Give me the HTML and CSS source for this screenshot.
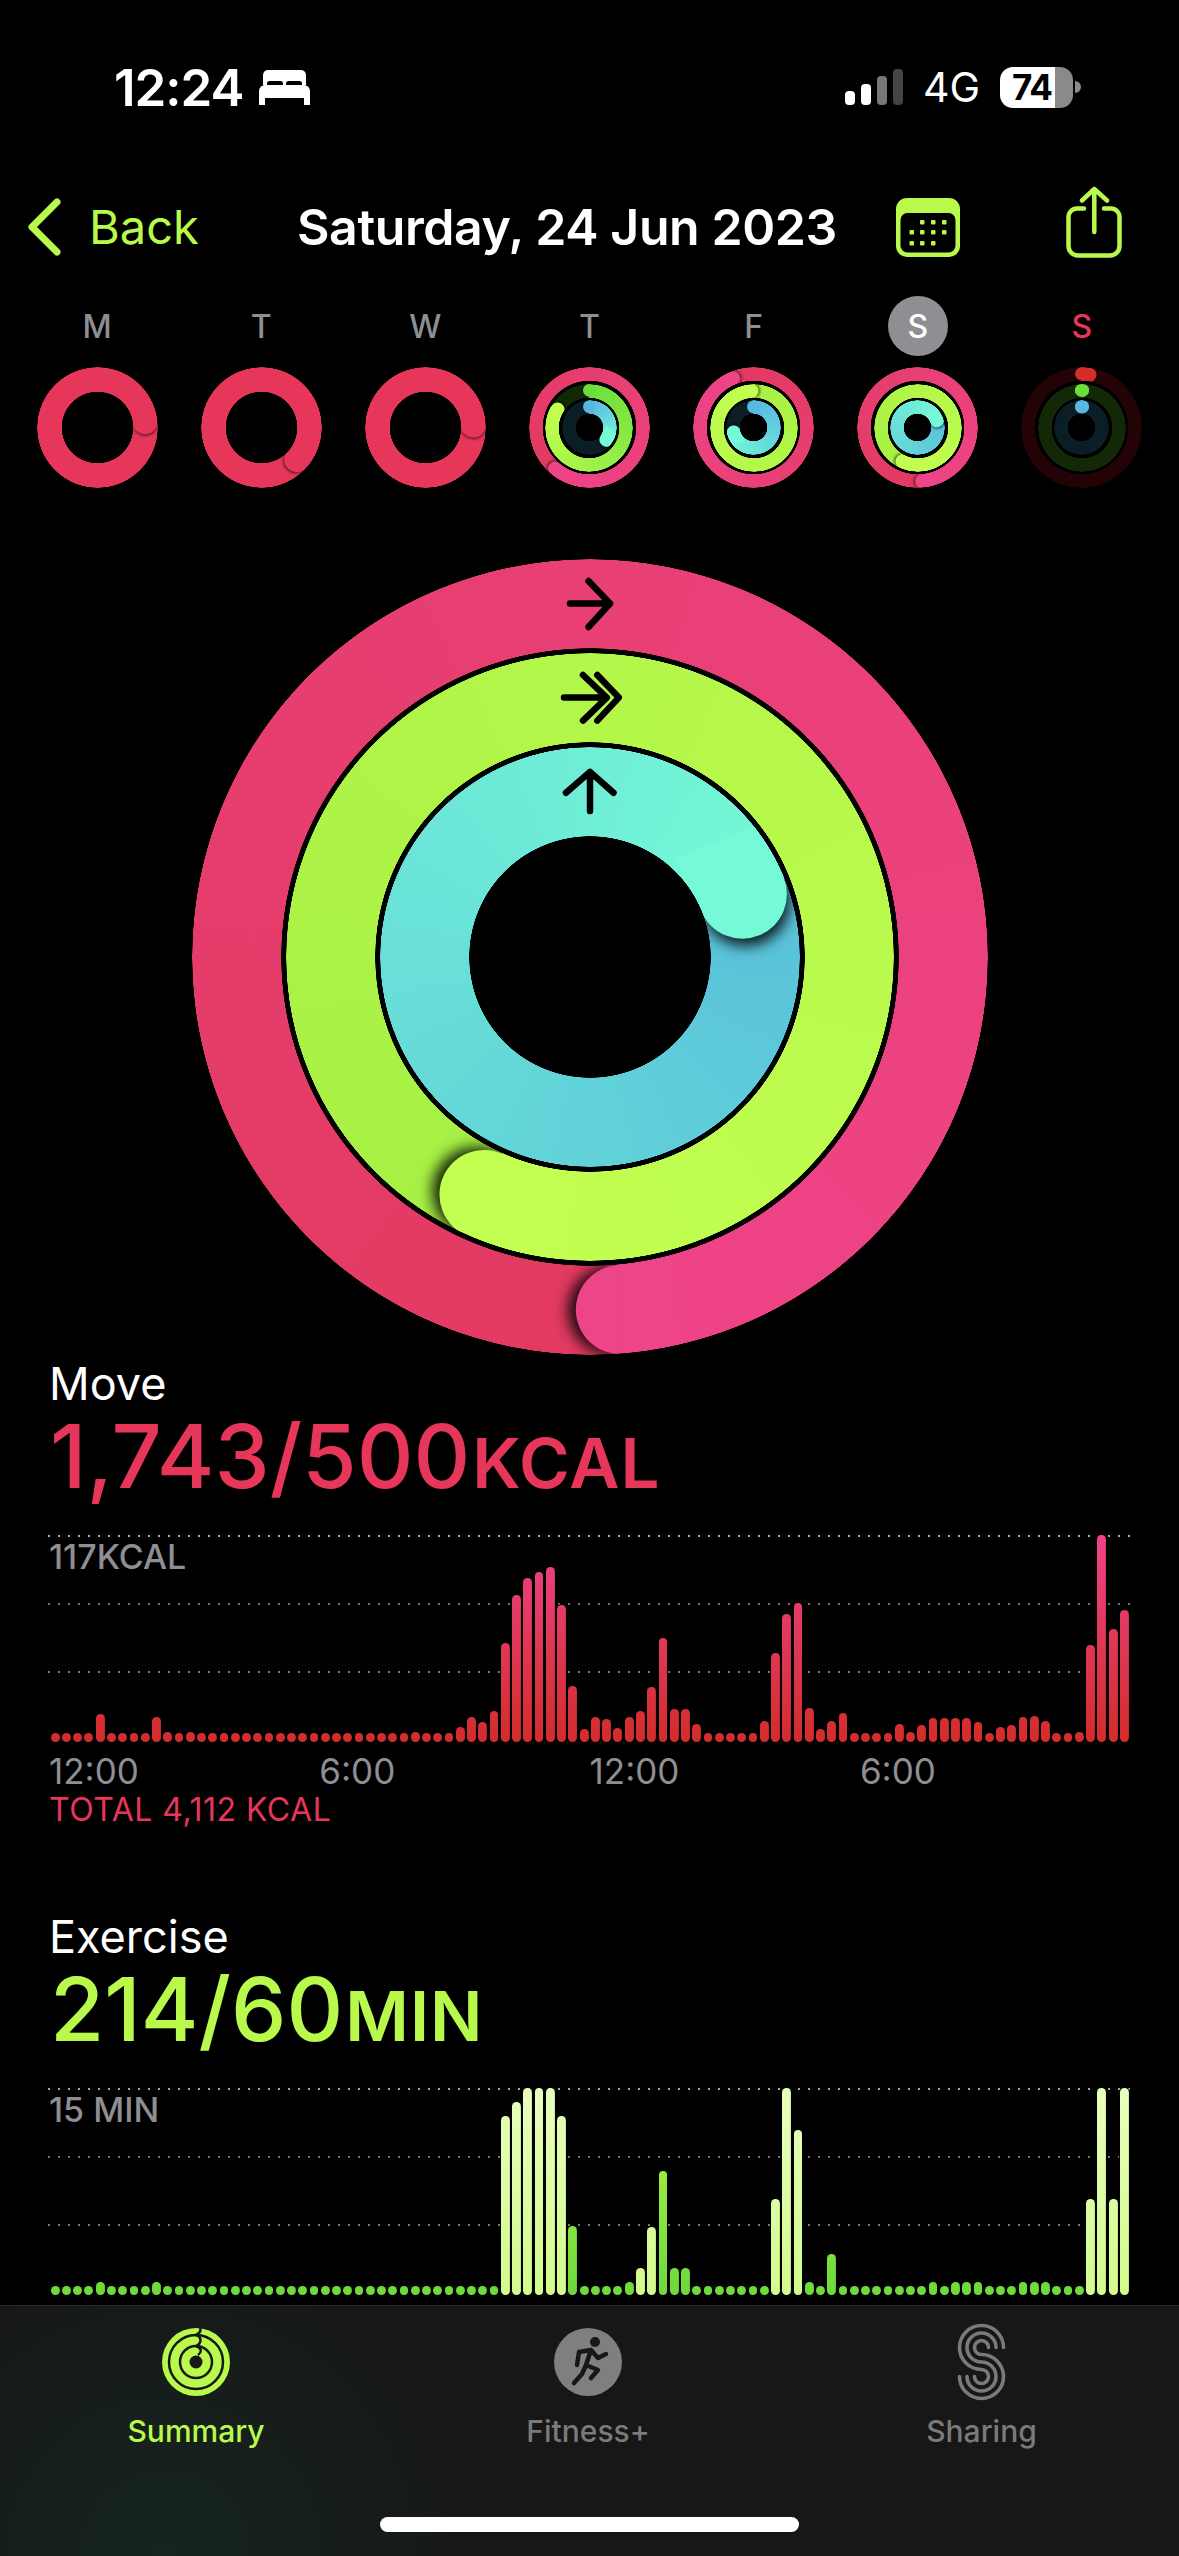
FILE: index.html
```html
<!DOCTYPE html>
<html lang="en">
<head>
    <meta charset="UTF-8">
    <meta name="viewport" content="width=device-width, initial-scale=1.0">
    <title>Activity Summary</title>
    <link rel="stylesheet" href="styles.css">
</head>
<body>
    <main class="page">
        <div class="status">
            <div class="status-left">
                <span class="time">12:24</span>
                <svg class="bed" viewBox="0 0 51 35">
                    <path fill="#fff" d="M9 0h33a5 5 0 0 1 5 5v10H4V5a5 5 0 0 1 5-5z"/>
                    <rect x="8" y="11" width="16" height="8" rx="2.500" fill="#000"/>
                    <rect x="27" y="11" width="16" height="8" rx="2.500" fill="#000"/>
                    <path fill="#fff" d="M6 15h39a6 6 0 0 1 6 6v14h-6v-7H6v7H0V21a6 6 0 0 1 6-6z"/>
                </svg>
            </div>
            <div class="status-right">
                <div class="signal">
                    <i class="sig-1"></i><i class="sig-2"></i><i class="sig-3"></i><i class="sig-4"></i>
                </div>
                <span class="network">4G</span>
                <div class="battery"><span>74</span></div>
                <i class="battery-nub"></i>
            </div>
        </div>

        <div class="nav">
            <div class="back">
                <svg class="chevron" viewBox="0 0 36 60">
                    <path d="M30 5L5 30l25 25" fill="none" stroke="#b9f94c" stroke-width="7" stroke-linecap="round" stroke-linejoin="round"/>
                </svg>
                <span>Back</span>
            </div>
            <div class="nav-title">Saturday, 24 Jun 2023</div>
            <svg class="calendar" viewBox="0 0 64 59">
                <rect width="64" height="59" rx="11" fill="#b9f94c"/>
                <rect x="4.500" y="15" width="55" height="39.500" rx="7" fill="#000"/>
                <g fill="#b9f94c">
                    <rect x="24" y="22" width="4.500" height="4.500" rx="1"/><rect x="35" y="22" width="4.500" height="4.500" rx="1"/><rect x="46" y="22" width="4.500" height="4.500" rx="1"/>
                    <rect x="13.500" y="32" width="4.500" height="4.500" rx="1"/><rect x="24" y="32" width="4.500" height="4.500" rx="1"/><rect x="35" y="32" width="4.500" height="4.500" rx="1"/><rect x="46" y="32" width="4.500" height="4.500" rx="1"/>
                    <rect x="13.500" y="43" width="4.500" height="4.500" rx="1"/><rect x="24" y="43" width="4.500" height="4.500" rx="1"/><rect x="35" y="43" width="4.500" height="4.500" rx="1"/>
                </g>
            </svg>
            <svg class="share" viewBox="0 0 56 72">
                <g fill="none" stroke="#b9f94c" stroke-width="4.500" stroke-linecap="round" stroke-linejoin="round">
                    <path d="M18 22.500H11a8.500 8.500 0 0 0-8.500 8.500v29a9.500 9.500 0 0 0 9.500 9.500h32a9.500 9.500 0 0 0 9.500-9.500V31a8.500 8.500 0 0 0-8.500-8.500h-7"/>
                    <path d="M28.300 46V3M16 14.500L28.300 3l12.700 11.500"/>
                </g>
            </svg>
        </div>

        <div class="week" id="week"></div>

        <div class="big-rings">
            <div class="activity" id="bigRings">
                <svg class="ring-arrows" viewBox="0 0 796 796">
                    <g fill="none" stroke="#000" stroke-width="6.500" stroke-linecap="round" stroke-linejoin="round">
                        <path d="M378 44.500h40M396.500 22l21.500 22.500-21.500 23.500"/>
                        <path d="M372 138.600h42M391 116l23.800 22.600L391 161.600M405.300 116l21.500 22.600-21.500 23"/>
                        <path d="M398 252v-39M374 233.800l24-20.900 23.500 20.900"/>
                    </g>
                </svg>
            </div>
        </div>

        <section class="metric">
            <div class="metric-label">Move</div>
            <div class="metric-value move-text">1,743/500<small>KCAL</small></div>
            <div class="chart chart-move" id="moveChart">
                <div class="gridlines"><i></i><i></i><i></i></div>
                <div class="chart-max">117KCAL</div>
            </div>
            <div class="axis"><span>12:00</span><span>6:00</span><span>12:00</span><span>6:00</span></div>
            <div class="total">TOTAL 4,112 KCAL</div>
        </section>

        <section class="metric metric-exercise">
            <div class="metric-label">Exercise</div>
            <div class="metric-value exercise-text">214/60<small>MIN</small></div>
            <div class="chart chart-exercise" id="exerciseChart">
                <div class="gridlines"><i></i><i></i><i></i></div>
                <div class="chart-max">15 MIN</div>
            </div>
        </section>
    </main>

    <nav class="tabbar">
        <div class="tabs">
            <div class="tab tab-active">
                <svg class="tab-icon" viewBox="0 0 68 68">
                    <circle cx="34" cy="34" r="34" fill="#b9f94c"/>
                    <circle cx="34" cy="34" r="6.500" fill="#161716"/>
                    <g fill="none" stroke="#161716" stroke-width="2.500">
                        <circle cx="34" cy="34" r="27"/>
                        <circle cx="34" cy="34" r="16"/>
                        <path d="M38 0c2 4-2 6-4 7 6 2 6 8 0 11 6 2 6 6 2 9"/>
                    </g>
                </svg>
                <span>Summary</span>
            </div>
            <div class="tab">
                <svg class="tab-icon" viewBox="0 0 68 68">
                    <circle cx="34" cy="34" r="34" fill="#7f7f7f"/>
                    <circle cx="41" cy="14" r="5" fill="#161716"/>
                    <g fill="none" stroke="#161716" stroke-width="4.500" stroke-linecap="round" stroke-linejoin="round">
                        <path d="M37 22l-5 15 12 5-7 8M32 37l-4 9-8 9M37 22l-12 2-2 13M37 22l7 8 8-4"/>
                    </g>
                </svg>
                <span>Fitness+</span>
            </div>
            <div class="tab">
                <svg class="tab-icon tab-icon-sharing" viewBox="0 0 49 78">
                    <g fill="none" stroke="#7a7a7a" stroke-width="3.600" stroke-linecap="round">
                        <path d="M46.500 24.500A22 22 0 1 0 24.500 46.500 7 7 0 1 1 17.500 53.500"/>
                        <path d="M39 24.500A14.500 14.500 0 1 0 24.500 39 14.500 14.500 0 1 1 10 53.500"/>
                        <path d="M31.500 24.500A7 7 0 1 0 24.500 31.500 22 22 0 1 1 2.500 53.500"/>
                    </g>
                </svg>
                <span>Sharing</span>
            </div>
        </div>
        <div class="home-indicator"></div>
    </nav>

    <script>
        const moveBars = [
            9, 9, 9, 9, 28, 9, 9, 9, 9, 25, 10, 9, 10, 9, 9, 9, 9, 9, 9, 9, 9, 9, 9, 9,
            9, 9, 9, 9, 9, 9, 9, 9, 10, 9, 9, 9, 15, 25, 20, 31, 99, 147, 164, 170, 175, 137, 56, 13,
            25, 23, 14, 25, 31, 55, 104, 33, 33, 18, 9, 9, 9, 9, 9, 21, 89, 128, 139, 34, 13, 21, 29, 9,
            9, 9, 9, 18, 10, 17, 24, 24, 24, 24, 20, 9, 15, 17, 25, 26, 21, 9, 9, 10, 97, 207, 113, 132
        ];
        const exerciseBars = [
            9, 9, 9, 9, 13, 9, 9, 9, 9, 13, 9, 9, 9, 9, 9, 9, 9, 9, 9, 9, 9, 9, 9, 9,
            9, 9, 9, 9, 9, 9, 9, 9, 9, 9, 9, 9, 9, 9, 9, 9, 179, 193, 207, 207, 207, 179, 69, 9,
            9, 9, 9, 13, 27, 68, 124, 27, 27, 9, 9, 9, 9, 9, 9, 9, 96, 207, 165, 13, 9, 41, 9, 9,
            9, 9, 9, 9, 9, 9, 13, 9, 13, 13, 13, 9, 9, 9, 13, 13, 13, 9, 9, 9, 96, 207, 96, 207
        ];
        const briskBars = [40, 41, 42, 43, 44, 45, 52, 53, 64, 65, 66, 92, 93, 94, 95];

        const bigSizes = { outer: [796, 608, 420], stroke: 89, shadow: "big" };
        const smallSizes = { outer: [121, 88, 55], stroke: 13.5, shadow: "small" };

        // angle = where the ring head stops, over = more than one full lap
        const week = [
            { day: "M", single: 83 },
            { day: "T", single: 132 },
            { day: "W", single: 87 },
            { day: "T", rings: [{ angle: 220, over: true }, { angle: 299 }, { angle: 125 }] },
            { day: "F", rings: [{ angle: 337, over: true }, { angle: 356, over: true }, { angle: 256 }] },
            { day: "S", today: true, rings: [{ angle: 175, over: true }, { angle: 204, over: true }, { angle: 67.5, over: true }] },
            { day: "S", sunday: true, rings: [{ angle: 8 }, { angle: 0 }, { angle: 0 }] }
        ];
        const ringNames = ["ring-move", "ring-exercise", "ring-stand"];

        function capHtml(angle, stroke, outer, extra) {
            let radius = outer / 2 - stroke / 2;
            return `<i class="cap ${extra}" style="--angle:${angle}deg;--radius:${radius}px"></i>`;
        }

        function ringHtml(name, ring, outer, stroke, shadow) {
            let from = ring.over ? ring.angle : 0;
            let end = ring.over ? 360 : ring.angle;
            let caps = capHtml(ring.angle, stroke, outer, "cap-head cap-" + shadow);
            if (!ring.over) caps = capHtml(0, stroke, outer, "cap-start") + caps;
            let over = ring.over ? "over" : "";
            return `<div class="ring ${name} ${over}" style="--size:${outer}px;--stroke:${stroke}px;--from:${from}deg;--end:${end}deg">${caps}</div>`;
        }

        function ringsHtml(rings, sizes) {
            return rings.map((ring, i) => ringHtml(ringNames[i], ring, sizes.outer[i], sizes.stroke, sizes.shadow)).join("");
        }

        function drawWeek() {
            let html = "";
            week.forEach(item => {
                let labelClass = item.today ? "day-today" : item.sunday ? "day-sunday" : "";
                let activityClass = item.sunday ? "activity activity-empty" : "activity";
                let rings = item.single !== undefined
                    ? `<div class="ring ring-single over" style="--size:121px;--stroke:24.5px;--from:0deg;--end:360deg">${capHtml(item.single, 24.5, 121, "cap-head cap-small")}</div>`
                    : ringsHtml(item.rings, smallSizes);
                html += `
                    <div class="day">
                        <div class="day-label ${labelClass}">${item.day}</div>
                        <div class="${activityClass}">${rings}</div>
                    </div>
                `;
            });
            document.getElementById("week").innerHTML = html;
        }

        function drawChart(id, bars, brisk) {
            let html = "";
            bars.forEach((height, i) => {
                let cls = brisk.includes(i) ? "bar bar-brisk" : "bar";
                html += `<div class="${cls}" style="height:${height}px"></div>`;
            });
            document.getElementById(id).insertAdjacentHTML("beforeend", `<div class="bars">${html}</div>`);
        }

        drawWeek();
        drawChart("moveChart", moveBars, []);
        drawChart("exerciseChart", exerciseBars, briskBars);
        document.getElementById("bigRings").insertAdjacentHTML("afterbegin", ringsHtml(week[5].rings, bigSizes));
    </script>
</body>
</html>
```

FILE: styles.css
```css
* {
    box-sizing: border-box;
}
html, body {
    margin: 0;
    height: 2556px;
    overflow: hidden;
}
body {
    display: flex;
    flex-direction: column;
    background: #000;
    color: #fff;
    font-family: Inter, "Liberation Sans", sans-serif;
}
.page {
    flex: 1;
    min-height: 0;
    overflow: hidden;
}
svg {
    display: block;
}

/* status bar */
.status {
    height: 174px;
    display: flex;
    justify-content: space-between;
    align-items: center;
    padding: 0 98px 0 114px;
}
.status-left, .status-right {
    display: flex;
    align-items: center;
}
.time {
    font-size: 51px;
    font-weight: 600;
    letter-spacing: -1px;
}
.bed {
    width: 51px;
    height: 35px;
    margin-left: 15px;
}
.signal {
    display: flex;
    align-items: flex-end;
    gap: 6px;
    height: 36px;
}
.signal i {
    width: 10px;
    border-radius: 4px;
    background: #fff;
}
.sig-1 { height: 14px; }
.sig-2 { height: 21px; }
.sig-3 { height: 29px; background: #777 !important; }
.sig-4 { height: 36px; background: #444 !important; }
.network {
    margin-left: 20px;
    font-size: 41px;
    font-weight: 400;
}
.battery {
    width: 73px;
    height: 41px;
    margin-left: 20px;
    border-radius: 13px;
    background: linear-gradient(90deg, #fff 75%, #8a8a8a 75%);
    color: #000;
    font-size: 35px;
    font-weight: 700;
    line-height: 41px;
    padding-left: 12px;
    letter-spacing: -1px;
}
.battery-nub {
    width: 6px;
    height: 12px;
    margin-left: 2px;
    border-radius: 0 6px 6px 0;
    background: #8a8a8a;
}

/* nav */
.nav {
    height: 106px;
    display: flex;
    align-items: center;
    position: relative;
    padding-left: 27px;
}
.back {
    display: flex;
    align-items: center;
    width: 270px;
    color: #b9f94c;
    font-size: 47px;
}
.back span {
    margin-top: -2px;
}
.chevron {
    width: 36px;
    height: 60px;
    margin-right: 26px;
}
.nav-title {
    width: 599px;
    font-size: 50px;
    font-weight: 600;
    letter-spacing: -0.4px;
}
.calendar {
    width: 64px;
    height: 59px;
}
.share {
    width: 56px;
    height: 72px;
    margin-left: 106px;
    margin-top: -10px;
}

/* week strip */
.week {
    margin-top: 16px;
    padding: 0 15px;
    display: grid;
    grid-template-columns: repeat(7, 1fr);
}
.day {
    display: flex;
    flex-direction: column;
    align-items: center;
    gap: 11px;
}
.day-label {
    width: 60px;
    height: 60px;
    border-radius: 50%;
    display: flex;
    align-items: center;
    justify-content: center;
    color: #8e8e93;
    font-size: 32px;
    font-weight: 500;
}
.day-today {
    background: #8e8e93;
    color: #fff;
}
.day-sunday {
    color: #e6375a;
}

/* activity rings */
.activity {
    display: grid;
    place-items: center;
    position: relative;
}
.ring {
    grid-area: 1 / 1;
    position: relative;
    width: var(--size);
    height: var(--size);
    border-radius: 50%;
    background: conic-gradient(from var(--from), var(--c0), var(--c1) var(--end), var(--track) var(--end));
    -webkit-mask: radial-gradient(closest-side, transparent calc(100% - var(--stroke) - 0.5px), #000 calc(100% - var(--stroke)), #000 calc(100% - 0.5px), transparent 100%);
    mask: radial-gradient(closest-side, transparent calc(100% - var(--stroke) - 0.5px), #000 calc(100% - var(--stroke)), #000 calc(100% - 0.5px), transparent 100%);
}
.ring-move { --c0: #d42d2a; --c1: #ea4484; --track: #240306; }
.ring-move.over { --c0: #e23a60; --c1: #ee4488; }
.ring-exercise { --c0: #6cde3c; --c1: #c3ff50; --track: #122806; }
.ring-exercise.over { --c0: #a6f044; --c1: #c3ff50; }
.ring-stand { --c0: #58b8e0; --c1: #75f9d6; --track: #0b1e26; }
.ring-stand.over { --c0: #58c0da; --c1: #75f9d6; }
.ring-single { --c0: #e6375a; --c1: #e6375a; --track: #e6375a; }
.activity-empty .ring { --c1: var(--c0); }
.cap {
    position: absolute;
    left: 50%;
    top: 50%;
    width: var(--stroke);
    height: var(--stroke);
    margin: calc(var(--stroke) / -2) 0 0 calc(var(--stroke) / -2);
    border-radius: 50%;
    transform: rotate(var(--angle)) translateY(calc(var(--radius) * -1));
}
.cap-start { background: var(--c0); }
.cap-head { background: var(--c1); }
/* covers the part of the head's shadow that would fall behind it */
.cap-head::after {
    content: "";
    position: absolute;
    top: -4px;
    bottom: -4px;
    right: 50%;
    left: -14px;
    background: var(--c1);
}
.cap-big { box-shadow: 8px 0 14px rgba(0, 0, 0, 0.85); }
.cap-small { box-shadow: 1.5px 0 3px rgba(0, 0, 0, 0.6); }
.cap-small::after {
    top: -1px;
    bottom: -1px;
    left: -4px;
}
.activity-empty .cap-small { box-shadow: none; }
.activity-empty .cap-small::after { display: none; }
.big-rings {
    margin-top: 71px;
    display: flex;
    justify-content: center;
}
.ring-arrows {
    grid-area: 1 / 1;
    position: relative;
    width: 796px;
    height: 796px;
}

/* metrics */
.metric {
    padding-left: 49px;
    margin-top: 4px;
}
.metric-exercise {
    margin-top: 84px;
}
.metric-label {
    font-size: 45px;
    line-height: 50px;
}
.metric-value {
    margin-top: 5px;
    font-size: 88px;
    font-weight: 500;
    line-height: 84px;
    padding-left: 1px;
}
.metric-value small {
    font-size: 69px;
    font-weight: 600;
    letter-spacing: 1px;
    margin-left: 2px;
}
.move-text { color: #e6375a; }
.exercise-text { color: #b9f94c; }
.chart {
    position: relative;
    width: 1082px;
    height: 207px;
    margin: 30px 0 0 -1px;
}
.gridlines {
    height: 100%;
    display: flex;
    flex-direction: column;
    gap: 66px;
}
.gridlines i {
    height: 2px;
    background: linear-gradient(90deg, #777 2px, transparent 2px) 0 0 / 10px 2px repeat-x;
}
.gridlines i:first-child {
    background-image: linear-gradient(90deg, #aaa 2px, transparent 2px);
}
.chart-max {
    position: absolute;
    left: 1px;
    top: 3px;
    color: #8e8e93;
    font-size: 34px;
    font-weight: 500;
    line-height: 38px;
}
.bars {
    position: absolute;
    inset: 0 0 0 1.5px;
    display: grid;
    grid-template-columns: repeat(96, 1fr);
    align-items: end;
    justify-items: center;
}
.bar {
    width: 8.8px;
    border-radius: 4.4px;
    box-shadow: 0 0 0 1px #000;
    background: linear-gradient(to top, var(--low), var(--high)) bottom / 100% 207px no-repeat;
}
.chart-move .bar { --low: #d32c2a; --high: #ee4488; }
.chart-exercise .bar { --low: #6cd93c; --high: #b8f845; }
.chart-exercise .bar-brisk { --low: #d2fb8c; --high: #e8ffbe; }
.axis {
    margin-top: 10px;
    display: grid;
    grid-template-columns: repeat(4, 270.3px);
    color: #8e8e93;
    font-size: 35px;
    line-height: 38px;
}
.total {
    margin-top: 2px;
    color: #e6375a;
    font-size: 32px;
    letter-spacing: 0.5px;
    line-height: 36px;
}

/* tab bar */
.tabbar {
    height: 251px;
    flex-shrink: 0;
    position: relative;
    border-top: 1px solid #2a2a2a;
    background: radial-gradient(circle at 14% 100%, #16251f 0, rgba(22, 37, 31, 0) 320px), #161716;
}
.tabs {
    display: grid;
    grid-template-columns: 392px 392px 395px;
    padding-top: 22px;
}
.tab {
    display: flex;
    flex-direction: column;
    align-items: center;
    color: #7a7a7a;
    font-size: 30px;
    font-weight: 500;
    line-height: 36px;
}
.tab span {
    margin-top: 17px;
}
.tab-active {
    color: #b9f94c;
}
.tab-icon {
    width: 68px;
    height: 68px;
}
.tab-icon-sharing {
    width: 49px;
    height: 78px;
    margin: -5px 0;
}
.home-indicator {
    position: absolute;
    left: 380px;
    bottom: 24px;
    width: 419px;
    height: 15px;
    border-radius: 8px;
    background: #fff;
}
```
